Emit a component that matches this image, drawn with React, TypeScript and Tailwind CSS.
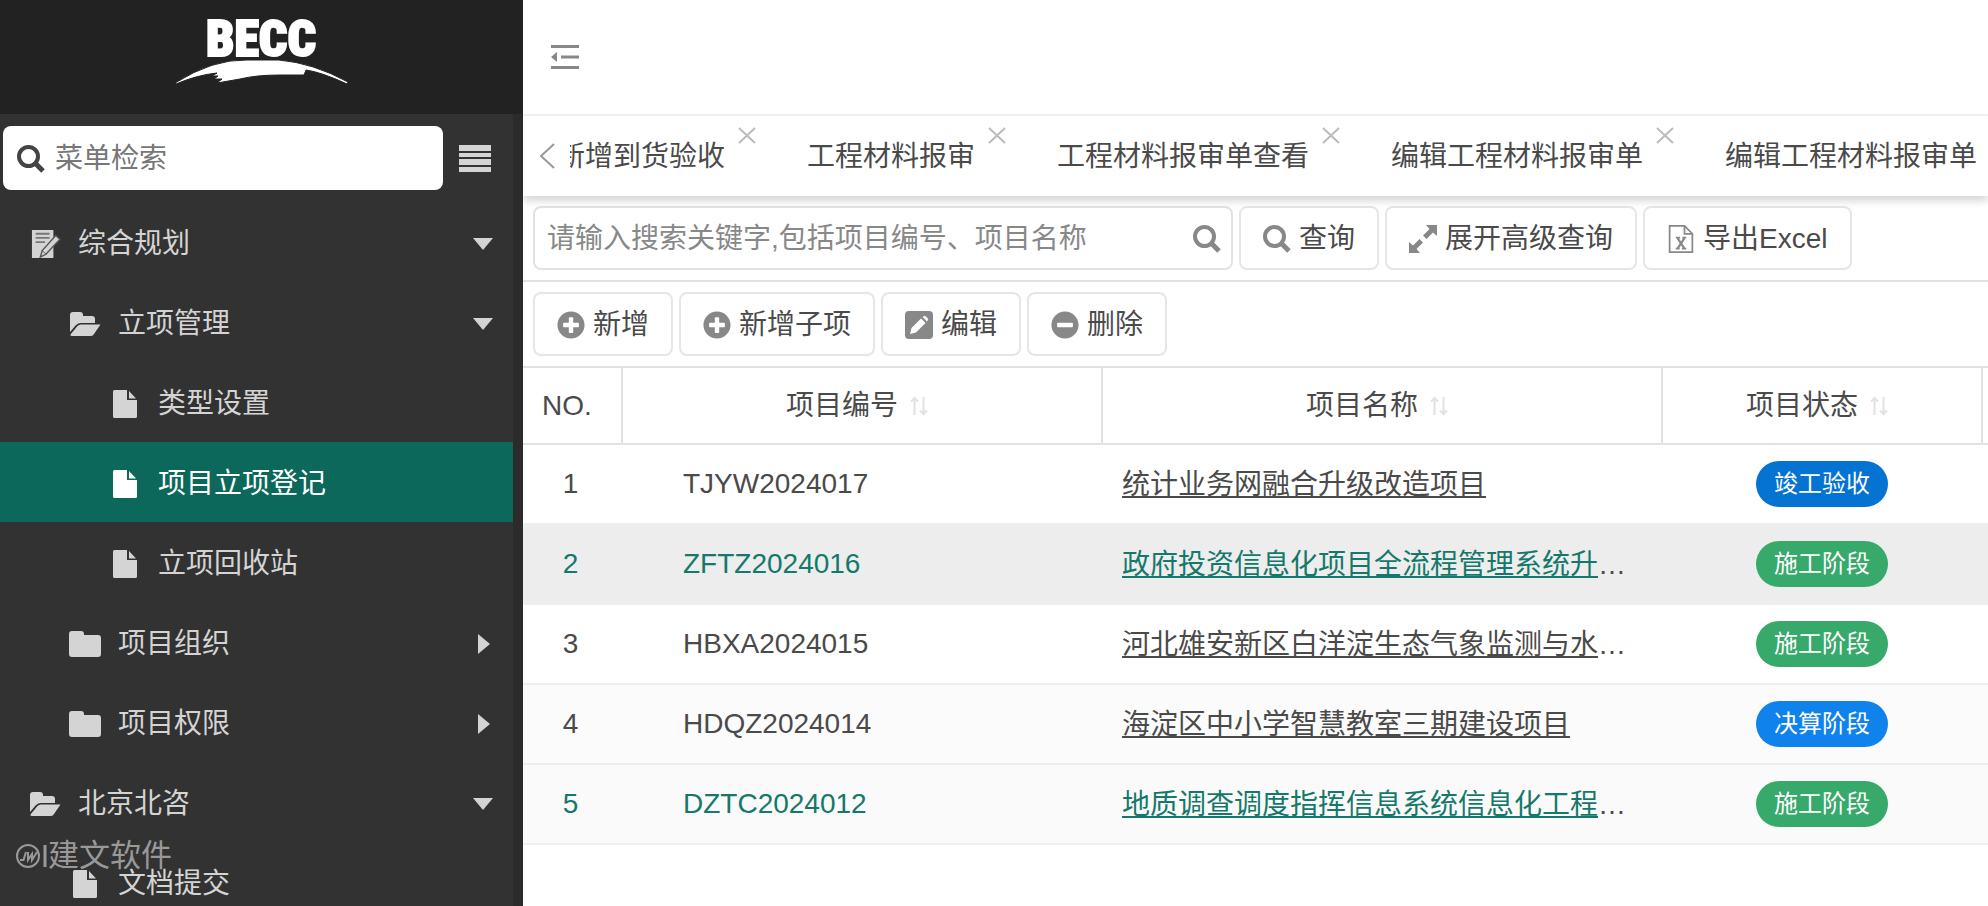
import React, { useState } from 'react';
import { FaPlusCircle, FaMinusCircle } from 'react-icons/fa';

type IconProps = { className?: string };

interface MenuItem {
  label: string;
  level: 0 | 1 | 2;
  icon: React.FC<IconProps>;
  arrow?: 'down' | 'right';
}

interface Project {
  no: number;
  code: string;
  name: string;
  status: string;
}

const SearchIcon: React.FC<IconProps> = ({ className }) => (
  <svg viewBox="0 0 28 28" className={className} fill="none" stroke="currentColor" aria-hidden="true">
    <circle cx="11.5" cy="11.5" r="9.5" strokeWidth="4" />
    <path d="M18.5 18.5 26 26" strokeWidth="5" />
  </svg>
);

const NoteIcon: React.FC<IconProps> = ({ className }) => (
  <svg viewBox="0 0 32 30" className={className} fill="currentColor" aria-hidden="true">
    <path d="M2 0h23v30H2z" />
    <path d="M6 4h15M6 8.500h15M6 13h10" stroke="#777" strokeWidth="2" />
    <path d="M27.500 6 32 10 17 26l-6 3 2-7z" stroke="#555" strokeWidth="1.500" />
    <path d="M13 22l4 4" stroke="#555" />
  </svg>
);

const FolderOpenIcon: React.FC<IconProps> = ({ className }) => (
  <svg viewBox="0 0 32 24" className={className} fill="currentColor" aria-hidden="true">
    <path d="M1 20V3q0-3 3-3h7q3 0 3 3v1h9q3 0 3 3v4H12q-3 0-5 2z" />
    <path d="M1.500 22.500 8.500 14Q10 12.500 12 12.500h19.500L25 22q-1 2-3 2H3q-2 0-1.500-1.500z" />
  </svg>
);

const FolderIcon: React.FC<IconProps> = ({ className }) => (
  <svg viewBox="0 0 32 26" className={className} fill="currentColor" aria-hidden="true">
    <path d="M0 3q0-3 3-3h9q3 0 3 3v1h14q3 0 3 3v16q0 3-3 3H3q-3 0-3-3z" />
  </svg>
);

const FileIcon: React.FC<IconProps> = ({ className }) => (
  <svg viewBox="0 0 24 28" className={className} fill="currentColor" aria-hidden="true">
    <path d="M1.500 0H14v10h10v16.500q0 1.500-1.500 1.500h-21Q0 28 0 26.500v-25Q0 0 1.500 0z" />
    <path d="M16 1l7 7.500h-7z" />
  </svg>
);

const EditIcon: React.FC<IconProps> = ({ className }) => (
  <svg viewBox="0 0 28 28" className={className} fill="currentColor" aria-hidden="true">
    <rect width="28" height="28" rx="4" />
    <path d="M5 23l1.500-6L16 7.500l4.500 4.500L11 21.500z" fill="#fff" />
    <path d="M17.500 6l1.500-1q1-.5 2 .5L22.500 7q1 1 .5 2l-1 1.500z" fill="#fff" />
  </svg>
);

const ExpandIcon: React.FC<IconProps> = ({ className }) => (
  <svg viewBox="0 0 28 28" className={className} fill="currentColor" aria-hidden="true">
    <path d="M17 0h11v11l-4-3.500-6.500 6.500-3.500-3.500L20.500 4zM0 17l4 3.500 6.500-6.500 3.500 3.500L7.500 24l3.500 4H0z" />
  </svg>
);

const ExcelIcon: React.FC<IconProps> = ({ className }) => (
  <svg viewBox="0 0 28 32" className={className} fill="none" stroke="currentColor" strokeWidth="2" aria-hidden="true">
    <path d="M1 1h17l9 9v21H1z" />
    <path d="M18 1v9h9" />
    <path d="M10 15l8 12M18 15l-8 12" strokeWidth="2.500" />
    <path d="M8 14.500h5M15.500 14.500h4.500M8 27h4.500M15 27h5" />
  </svg>
);

const OutdentIcon: React.FC<IconProps> = ({ className }) => (
  <svg viewBox="0 0 28 26" className={className} fill="currentColor" aria-hidden="true">
    <path d="M0 1h28v3H0zM10 11.500h18v3H10zM0 22h28v3H0zM0 13l6-5v10z" />
  </svg>
);

const SortIcon: React.FC<IconProps> = ({ className }) => (
  <svg viewBox="0 0 18 20" className={className} fill="none" stroke="currentColor" strokeWidth="2" aria-hidden="true">
    <path d="M4.500 19V2M1 5.500 4.500 2 8 5.500M13.500 1v17M10 14.500l3.500 3.500 3.500-3.500" />
  </svg>
);

const menu: MenuItem[] = [
  { label: '综合规划', level: 0, icon: NoteIcon, arrow: 'down' },
  { label: '立项管理', level: 1, icon: FolderOpenIcon, arrow: 'down' },
  { label: '类型设置', level: 2, icon: FileIcon },
  { label: '项目立项登记', level: 2, icon: FileIcon },
  { label: '立项回收站', level: 2, icon: FileIcon },
  { label: '项目组织', level: 1, icon: FolderIcon, arrow: 'right' },
  { label: '项目权限', level: 1, icon: FolderIcon, arrow: 'right' },
  { label: '北京北咨', level: 0, icon: FolderOpenIcon, arrow: 'down' },
  { label: '文档提交', level: 1, icon: FileIcon },
];

const tabs = ['新增到货验收', '工程材料报审', '工程材料报审单查看', '编辑工程材料报审单', '编辑工程材料报审单'];

const projects: Project[] = [
  { no: 1, code: 'TJYW2024017', name: '统计业务网融合升级改造项目', status: '竣工验收' },
  { no: 2, code: 'ZFTZ2024016', name: '政府投资信息化项目全流程管理系统升级改造项目', status: '施工阶段' },
  { no: 3, code: 'HBXA2024015', name: '河北雄安新区白洋淀生态气象监测与水环境项目', status: '施工阶段' },
  { no: 4, code: 'HDQZ2024014', name: '海淀区中小学智慧教室三期建设项目', status: '决算阶段' },
  { no: 5, code: 'DZTC2024012', name: '地质调查调度指挥信息系统信息化工程建设项目', status: '施工阶段' },
];

const indent = ['pl-7', 'pl-[68px]', 'pl-[108px]'];

const statusColor: Record<string, string> = {
  竣工验收: 'bg-[#0573d1]',
  施工阶段: 'bg-[#36a96b]',
  决算阶段: 'bg-[#1082eb]',
};

const rowColor: Record<number, string> = {
  2: 'bg-[#ededed]',
  4: 'bg-[#fbfbfb]',
  5: 'bg-[#fafafa]',
};

const textColor: Record<number, string> = {
  2: 'text-[#14796a]',
  5: 'text-[#14796a]',
};

const Logo: React.FC = () => (
  <svg viewBox="0 0 174 78" className="h-[78px] w-[174px]" role="img" aria-label="BECC">
    <text
      x="86"
      y="48"
      textAnchor="middle"
      fontSize="50"
      fontWeight="900"
      fontFamily="'Roboto Condensed', 'Open Sans Condensed', 'Noto Sans CJK SC', sans-serif"
      fill="#fff"
      stroke="#fff"
      strokeWidth="2"
    >
      BECC
    </text>
    <path
      d="M0 75Q38 51 72 52h32q34 3 69 22l-1 2q-26-12-41-14l-2 5H105q-24 0-40 4l-23 4 5-4-8 0 4-3-6 0 5-3Q22 67 1 76z"
      fill="#fff"
      stroke="#222"
      strokeWidth="1"
    />
  </svg>
);

const ToolButton: React.FC<{ icon: React.FC<IconProps>; label: string }> = ({ icon: Icon, label }) => (
  <button
    type="button"
    className="flex h-16 shrink-0 items-center gap-2 rounded-lg border-2 border-[#e6e6e6] bg-white px-[22px] pt-0.5 whitespace-nowrap"
  >
    <Icon className="size-7 text-[#888]" />
    {label}
  </button>
);

const Sidebar: React.FC = () => {
  const [active, setActive] = useState('项目立项登记');

  return (
    <aside className="relative flex w-[523px] shrink-0 flex-col overflow-hidden bg-[#323232] text-[#d4d4d4]">
      <div className="flex h-[114px] shrink-0 justify-center bg-[#222] pt-2">
        <Logo />
      </div>
      <div className="flex min-h-0 flex-1 flex-col border-r-[10px] border-[#2b2b2b]">
        <div className="flex h-[88px] shrink-0 items-center gap-4 pl-[3px]">
          <label className="flex h-16 w-[440px] items-center gap-2.5 rounded-lg bg-white px-3.5 pt-0.5 text-[#444]">
            <SearchIcon className="size-7 shrink-0" />
            <input
              type="text"
              aria-label="菜单检索"
              placeholder="菜单检索"
              className="min-w-0 flex-1 bg-transparent outline-none placeholder:text-[#777]"
            />
          </label>
          <button type="button" aria-label="菜单">
            <svg viewBox="0 0 32 27" className="h-[27px] w-8" fill="currentColor" aria-hidden="true">
              <path d="M0 0h32v6H0zM0 8h32v4H0zM0 14h32v6H0zM0 22h32v5H0z" />
            </svg>
          </button>
        </div>
        <nav>
          {menu.map(({ label, level, icon: Icon, arrow }) => (
            <a
              key={label}
              href="#"
              onClick={() => setActive(label)}
              className={`flex h-20 items-center pt-[3px] pr-5 ${indent[level]} ${
                label === active ? 'bg-[#0b685b] text-white' : ''
              }`}
            >
              <span className="mr-4 flex w-[34px] justify-center">
                <Icon className="h-7 w-8" />
              </span>
              {label}
              {arrow && (
                <svg viewBox="0 0 20 20" className="ml-auto size-5" fill="currentColor" aria-hidden="true">
                  <path d={arrow === 'down' ? 'M0 4h20l-10 12z' : 'M5 0v20l12-10z'} />
                </svg>
              )}
            </a>
          ))}
        </nav>
      </div>
      <div className="absolute bottom-8 left-4 flex items-center text-[31px] leading-9 text-[#999]">
        <svg viewBox="0 0 32 26" className="h-[26px] w-8" fill="none" stroke="currentColor" aria-hidden="true">
          <circle cx="12" cy="13" r="11" strokeWidth="2" />
          <path d="M4 17h3.500l2.500-8M12 9v8l4-6v6l5-8" strokeWidth="2" />
          <path d="M29 2v22" strokeWidth="3" />
        </svg>
        建文软件
      </div>
    </aside>
  );
};

const TabBar: React.FC = () => (
  <div className="relative z-10 flex h-20 shrink-0 bg-white shadow-[0_5px_8px_rgba(0,0,0,0.16)]">
    <button type="button" aria-label="向左" className="flex w-[47px] shrink-0 items-center pl-4 text-[#999]">
      <svg viewBox="0 0 16 26" className="h-[26px] w-4" fill="none" stroke="currentColor" strokeWidth="2" aria-hidden="true">
        <path d="M15 1 2 13l13 12" />
      </svg>
    </button>
    <div className="flex min-w-0 flex-1 overflow-hidden">
      <div className="-ml-[54px] flex">
        {tabs.map((tab, i) => (
          <div key={i} className="relative flex items-center px-[41px] pt-0.5 whitespace-nowrap">
            <a href="#">{tab}</a>
            <button type="button" aria-label="关闭" className="absolute top-2.5 right-2.5 text-[#bbb]">
              <svg viewBox="0 0 18 18" className="size-[18px]" fill="none" stroke="currentColor" strokeWidth="2" aria-hidden="true">
                <path d="M1 2l16 15M17 2 1 17" />
              </svg>
            </button>
          </div>
        ))}
      </div>
    </div>
  </div>
);

const ProjectTable: React.FC = () => (
  <table className="w-full table-fixed border-collapse">
    <colgroup>
      <col className="w-[99px]" />
      <col className="w-[480px]" />
      <col className="w-[560px]" />
      <col className="w-[320px]" />
      <col />
    </colgroup>
    <thead>
      <tr className="h-[76px] border-b-2 border-[#e2e2e2]">
        <th className="border-r-2 border-[#e2e2e2] pr-2.5 font-normal">NO.</th>
        {['项目编号', '项目名称', '项目状态'].map((title) => (
          <th key={title} className="border-r-2 border-[#e2e2e2] pr-2.5 font-normal">
            <div className="flex items-center justify-center gap-3">
              {title}
              <SortIcon className="h-5 w-[18px] text-[#e2e2e2]" />
            </div>
          </th>
        ))}
        <th />
      </tr>
    </thead>
    <tbody>
      {projects.map((p) => (
        <tr key={p.no} className={`h-20 border-b-2 border-[#eee] ${rowColor[p.no] ?? ''}`}>
          <td className={`pr-1 text-center ${textColor[p.no] ?? ''}`}>{p.no}</td>
          <td className={`pl-[61px] ${textColor[p.no] ?? ''}`}>{p.code}</td>
          <td className="px-5 pt-0.5">
            <div className="truncate">
              <a href="#" className={`underline decoration-2 underline-offset-2 ${textColor[p.no] ?? ''}`}>
                {p.name}
              </a>
            </div>
          </td>
          <td className="text-center">
            <span className={`inline-flex h-[46px] items-center rounded-full px-[18px] align-middle text-2xl text-white ${statusColor[p.status]}`}>
              {p.status}
            </span>
          </td>
          <td />
        </tr>
      ))}
    </tbody>
  </table>
);

const App: React.FC = () => (
  <div className="flex h-screen overflow-hidden bg-white font-['Liberation_Sans','Noto_Sans_CJK_SC',sans-serif] text-[28px] leading-9 text-[#4a4a4a]">
    <Sidebar />
    <main className="flex min-w-0 flex-1 flex-col overflow-hidden">
      <header className="flex h-[116px] shrink-0 items-center border-b-2 border-[#f2f2f2] px-7">
        <button type="button" aria-label="收起菜单" className="text-[#888]">
          <OutdentIcon className="h-[26px] w-7" />
        </button>
      </header>
      <TabBar />
      <div className="flex shrink-0 gap-1.5 border-b-2 border-[#e2e2e2] px-2.5 py-2.5">
        <label className="flex h-16 w-[700px] items-center rounded-lg border-2 border-[#e2e2e2] pt-0.5 pr-2.5 pl-3">
          <input
            type="text"
            aria-label="搜索关键字"
            placeholder="请输入搜索关键字,包括项目编号、项目名称"
            className="min-w-0 flex-1 bg-transparent outline-none placeholder:text-[#888]"
          />
          <SearchIcon className="size-7 shrink-0 text-[#888]" />
        </label>
        <ToolButton icon={SearchIcon} label="查询" />
        <ToolButton icon={ExpandIcon} label="展开高级查询" />
        <ToolButton icon={ExcelIcon} label="导出Excel" />
      </div>
      <div className="flex shrink-0 gap-1.5 border-b-2 border-[#e2e2e2] px-2.5 py-2.5">
        <ToolButton icon={FaPlusCircle} label="新增" />
        <ToolButton icon={FaPlusCircle} label="新增子项" />
        <ToolButton icon={EditIcon} label="编辑" />
        <ToolButton icon={FaMinusCircle} label="删除" />
      </div>
      <ProjectTable />
    </main>
  </div>
);

export default App;
